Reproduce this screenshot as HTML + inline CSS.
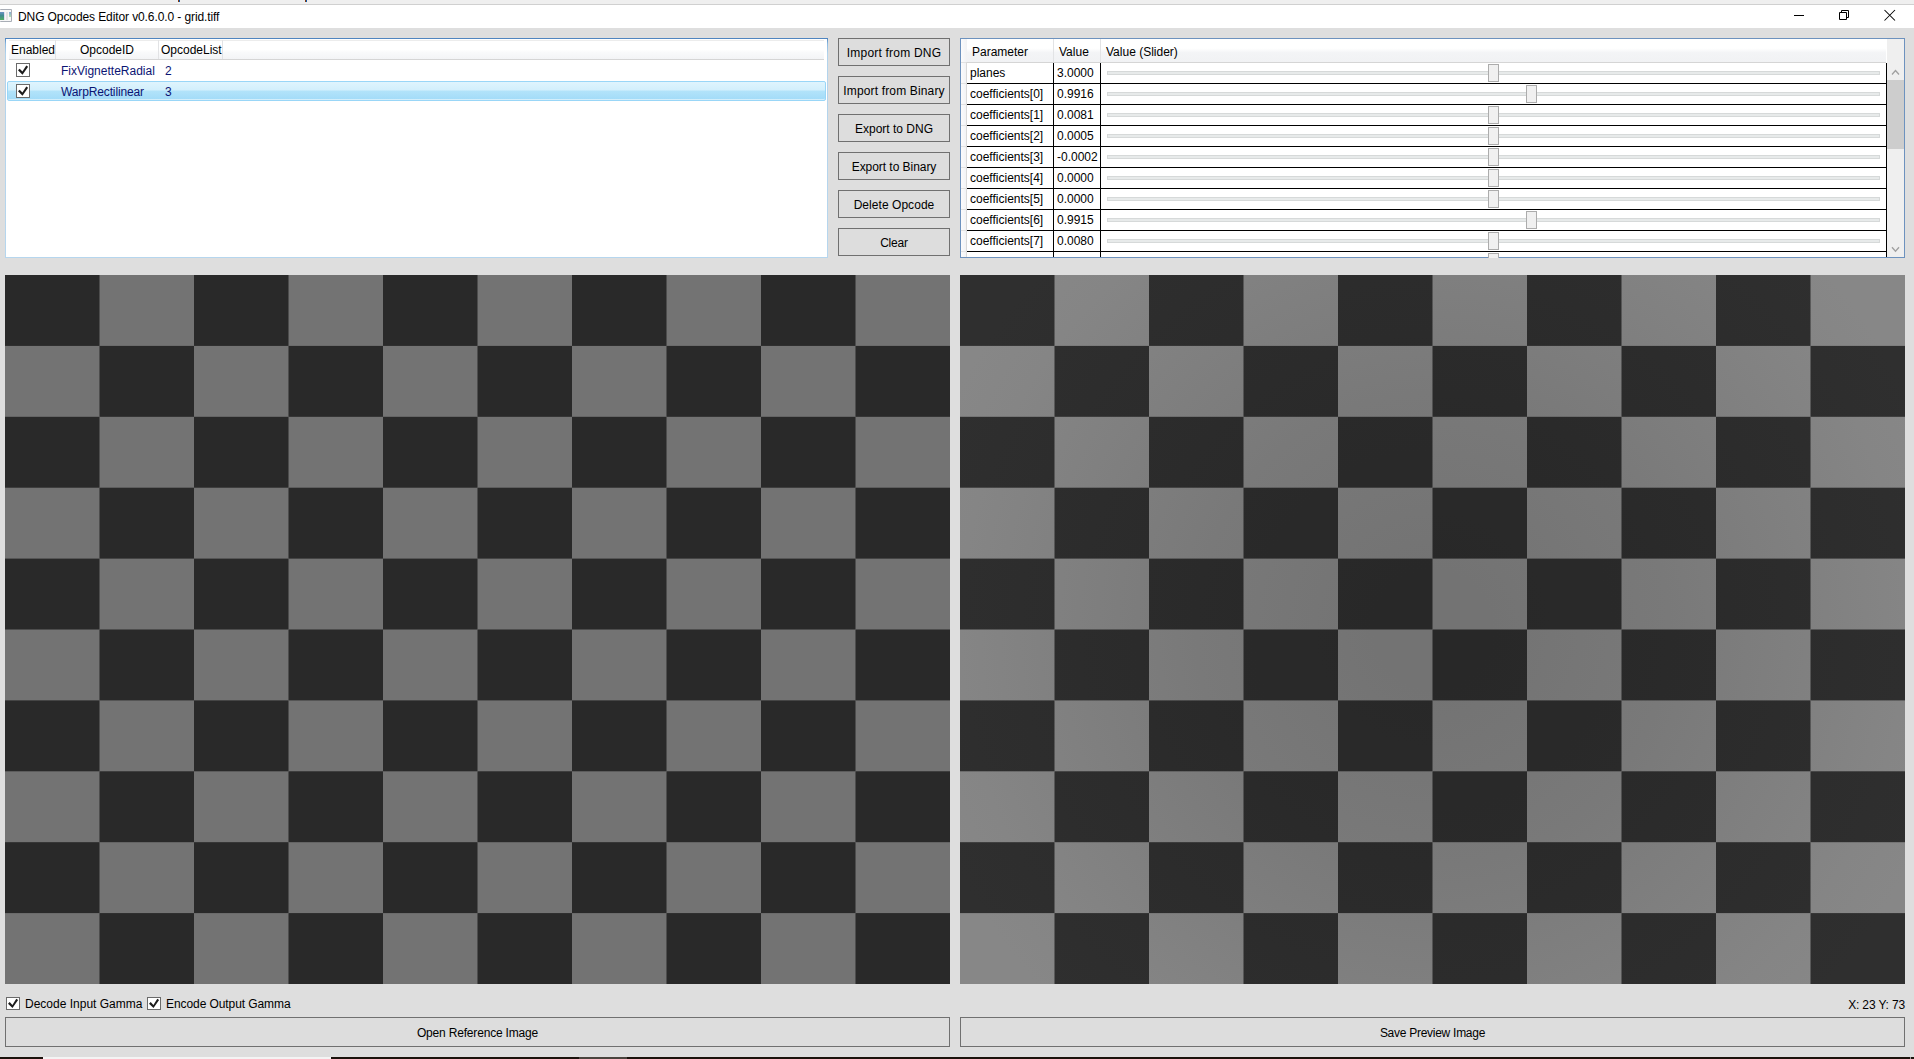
<!DOCTYPE html>
<html><head><meta charset="utf-8">
<style>
*{box-sizing:border-box;margin:0;padding:0}
html,body{width:1914px;height:1059px;overflow:hidden}
body{position:relative;background:#dedede;font-family:"Liberation Sans",sans-serif;font-size:12px;color:#000}
.a{position:absolute}
.t{position:absolute;white-space:pre;line-height:14px;height:14px}
.btn{position:absolute;background:#dddddd;border:1px solid #707070}
.btn span{position:absolute;left:0;right:0;text-align:center;white-space:pre;line-height:14px}
.cb{position:absolute;width:14px;height:14px;border:1px solid #6a6a6a;background:#fff}
.cb svg{position:absolute;left:-1px;top:-1px}
.hl{position:absolute;height:1px;background:#000}
.vl{position:absolute;width:1px;background:#000}
.track{position:absolute;left:1107px;width:773px;height:4px;background:#e7eaea;border:1px solid #d6d9d9}
.thumb{position:absolute;width:11px;height:18px;background:#f0f0f0;border:1px solid #acacac}
.navy{color:#0b1473}
.hdr{position:absolute;background:linear-gradient(#fff 0,#fff 40%,#f3f4f6 60%,#f1f2f4 100%)}
</style></head><body>
<!-- top strip -->
<div class="a" style="left:0;top:0;width:1914px;height:4px;background:#efefef"></div>
<div class="a" style="left:0;top:4px;width:1914px;height:1px;background:#d0d0d0"></div>
<div class="a" style="left:178px;top:0;width:1px;height:2px;background:#8a3c08"></div><div class="a" style="left:179px;top:0;width:1px;height:2px;background:#0a55b0"></div>
<div class="a" style="left:305px;top:0;width:1px;height:2px;background:#8a3c08"></div><div class="a" style="left:306px;top:0;width:1px;height:2px;background:#0a55b0"></div>
<!-- title bar -->
<div class="a" style="left:0;top:5px;width:1914px;height:23px;background:#fff"></div>
<svg class="a" style="left:0;top:9px" width="13" height="13" viewBox="0 0 13 13"><defs><linearGradient id="ig1" x1="0" y1="0" x2="0" y2="1"><stop offset="0" stop-color="#6c92c4"/><stop offset="0.45" stop-color="#3f8a8e"/><stop offset="1" stop-color="#52ad62"/></linearGradient><linearGradient id="ig2" x1="0" y1="0" x2="0" y2="1"><stop offset="0" stop-color="#84a6d6"/><stop offset="1" stop-color="#b2e0b0"/></linearGradient></defs><rect x="0" y="0" width="12" height="13" rx="1" fill="#a9aeb6"/><rect x="0" y="1" width="11" height="11" fill="#f7f7f7"/><rect x="0" y="3" width="4" height="8" fill="url(#ig1)"/><rect x="4" y="3" width="1" height="8" fill="#e2dcee"/><rect x="6" y="3" width="2" height="8" fill="#e3e3e3"/><rect x="9" y="3" width="2" height="5" fill="url(#ig2)"/></svg>
<div class="t" style="left:18px;top:10px;letter-spacing:-0.1px">DNG Opcodes Editor v0.6.0.0 - grid.tiff</div>
<div class="a" style="left:1794px;top:15px;width:10px;height:1px;background:#000"></div>
<svg class="a" style="left:1837px;top:8px" width="14" height="14" viewBox="0 0 14 14"><path d="M2.5 4.5h7v7h-7z M4.5 4.5v-2h7v7h-2" fill="none" stroke="#000" stroke-width="1"/></svg>
<svg class="a" style="left:1883px;top:9px" width="14" height="13" viewBox="0 0 14 13"><path d="M1.5 1L12 11.5M12 1L1.5 11.5" fill="none" stroke="#000" stroke-width="1.05"/></svg>

<!-- opcode list -->
<div class="a" style="left:5px;top:38px;width:823px;height:220px;background:linear-gradient(#4a80bc 0,#8dbbe2 6px,#b2d3ec 16px,#b6d6ee 100%)"></div><div class="a" style="left:6px;top:39px;width:821px;height:218px;background:#fff"></div>
<div class="a" style="left:9px;top:40px;width:815px;height:19px;background:linear-gradient(#fff 0,#fff 50%,#f9fafb 65%,#f3f4f6 100%)"></div><div class="a" style="left:9px;top:40px;width:815px;height:1px;background:#ececec"></div>
<div class="a" style="left:9px;top:59px;width:815px;height:1px;background:#d5d5d5"></div>
<div class="a" style="left:55px;top:40px;width:1px;height:19px;background:#e2e3e5"></div>
<div class="a" style="left:158px;top:40px;width:1px;height:19px;background:#e2e3e5"></div>
<div class="a" style="left:222px;top:40px;width:1px;height:19px;background:#e2e3e5"></div>
<div class="t" style="left:11px;top:43px">Enabled</div>
<div class="t" style="left:80px;top:43px">OpcodeID</div>
<div class="t" style="left:161px;top:43px">OpcodeList</div>
<div class="a" style="left:7px;top:81px;width:819px;height:20px;border:1px solid #99d6f7;border-radius:2px;box-shadow:inset 0 -1px #d3eefb;background:linear-gradient(#dff4fd 0,#d2effc 45%,#b2e3fa 50%,#a2dbf8 100%)"></div>
<div class="cb" style="left:16px;top:63px"><svg width="14" height="14" viewBox="0 0 14 14"><path d="M2.0 7.3L6.5 11.7L12.1 3.7L10.3 2.4L6.4 8.6L3.7 5.7Z" fill="#1c1c1c"/></svg></div>
<div class="cb" style="left:16px;top:84px"><svg width="14" height="14" viewBox="0 0 14 14"><path d="M2.0 7.3L6.5 11.7L12.1 3.7L10.3 2.4L6.4 8.6L3.7 5.7Z" fill="#1c1c1c"/></svg></div>
<div class="t navy" style="left:61px;top:64px">FixVignetteRadial</div>
<div class="t navy" style="left:165px;top:64px">2</div>
<div class="t navy" style="left:61px;top:85px;letter-spacing:-0.13px">WarpRectilinear</div>
<div class="t navy" style="left:165px;top:85px">3</div>

<!-- buttons -->
<div class="btn" style="left:838px;top:38px;width:112px;height:28px"><span style="top:7px;letter-spacing:0.2px">Import from DNG</span></div>
<div class="btn" style="left:838px;top:76px;width:112px;height:28px"><span style="top:7px;letter-spacing:0.15px">Import from Binary</span></div>
<div class="btn" style="left:838px;top:114px;width:112px;height:28px"><span style="top:7px;letter-spacing:0">Export to DNG</span></div>
<div class="btn" style="left:838px;top:152px;width:112px;height:28px"><span style="top:7px;letter-spacing:-0.05px">Export to Binary</span></div>
<div class="btn" style="left:838px;top:190px;width:112px;height:28px"><span style="top:7px;letter-spacing:0.05px">Delete Opcode</span></div>
<div class="btn" style="left:838px;top:228px;width:112px;height:28px"><span style="top:7px;letter-spacing:-0.2px">Clear</span></div>

<!-- params grid -->
<div class="a" style="left:960px;top:38px;width:945px;height:220px;background:#fff;border:1px solid #6d92be"></div>
<div class="hdr" style="left:967px;top:39px;width:919px;height:23px"></div>
<div class="a" style="left:961px;top:39px;width:6px;height:218px;background:linear-gradient(90deg,#fbfbfc,#f1f2f4)"></div><div class="a" style="left:966px;top:62px;width:1px;height:195px;background:#d9d9d9"></div><div class="a" style="left:961px;top:62px;width:5px;height:1px;background:#e2e2e2"></div><div class="a" style="left:961px;top:83px;width:5px;height:1px;background:#e2e2e2"></div><div class="a" style="left:961px;top:104px;width:5px;height:1px;background:#e2e2e2"></div><div class="a" style="left:961px;top:125px;width:5px;height:1px;background:#e2e2e2"></div><div class="a" style="left:961px;top:146px;width:5px;height:1px;background:#e2e2e2"></div><div class="a" style="left:961px;top:167px;width:5px;height:1px;background:#e2e2e2"></div><div class="a" style="left:961px;top:188px;width:5px;height:1px;background:#e2e2e2"></div><div class="a" style="left:961px;top:209px;width:5px;height:1px;background:#e2e2e2"></div><div class="a" style="left:961px;top:230px;width:5px;height:1px;background:#e2e2e2"></div><div class="a" style="left:961px;top:251px;width:5px;height:1px;background:#e2e2e2"></div>
<div class="a" style="left:967px;top:62px;width:919px;height:1px;background:#d5d5d5"></div>
<div class="a" style="left:1053px;top:39px;width:1px;height:23px;background:#e2e3e5"></div>
<div class="a" style="left:1100px;top:39px;width:1px;height:23px;background:#e2e3e5"></div>
<div class="t" style="left:972px;top:45px">Parameter</div>
<div class="t" style="left:1059px;top:45px">Value</div>
<div class="t" style="left:1106px;top:45px">Value (Slider)</div>
<div class="vl" style="left:1053px;top:63px;height:194px"></div>
<div class="vl" style="left:1100px;top:63px;height:194px"></div>
<div class="vl" style="left:1886px;top:63px;height:194px"></div>
<div class="t" style="left:970px;top:66px">planes</div>
<div class="t" style="left:1057px;top:66px">3.0000</div>
<div class="track" style="top:71px"></div>
<div class="thumb" style="left:1488px;top:64px"></div>
<div class="hl" style="left:967px;top:83px;width:920px"></div>
<div class="t" style="left:970px;top:87px">coefficients[0]</div>
<div class="t" style="left:1057px;top:87px">0.9916</div>
<div class="track" style="top:92px"></div>
<div class="thumb" style="left:1526px;top:85px"></div>
<div class="hl" style="left:967px;top:104px;width:920px"></div>
<div class="t" style="left:970px;top:108px">coefficients[1]</div>
<div class="t" style="left:1057px;top:108px">0.0081</div>
<div class="track" style="top:113px"></div>
<div class="thumb" style="left:1488px;top:106px"></div>
<div class="hl" style="left:967px;top:125px;width:920px"></div>
<div class="t" style="left:970px;top:129px">coefficients[2]</div>
<div class="t" style="left:1057px;top:129px">0.0005</div>
<div class="track" style="top:134px"></div>
<div class="thumb" style="left:1488px;top:127px"></div>
<div class="hl" style="left:967px;top:146px;width:920px"></div>
<div class="t" style="left:970px;top:150px">coefficients[3]</div>
<div class="t" style="left:1057px;top:150px">-0.0002</div>
<div class="track" style="top:155px"></div>
<div class="thumb" style="left:1488px;top:148px"></div>
<div class="hl" style="left:967px;top:167px;width:920px"></div>
<div class="t" style="left:970px;top:171px">coefficients[4]</div>
<div class="t" style="left:1057px;top:171px">0.0000</div>
<div class="track" style="top:176px"></div>
<div class="thumb" style="left:1488px;top:169px"></div>
<div class="hl" style="left:967px;top:188px;width:920px"></div>
<div class="t" style="left:970px;top:192px">coefficients[5]</div>
<div class="t" style="left:1057px;top:192px">0.0000</div>
<div class="track" style="top:197px"></div>
<div class="thumb" style="left:1488px;top:190px"></div>
<div class="hl" style="left:967px;top:209px;width:920px"></div>
<div class="t" style="left:970px;top:213px">coefficients[6]</div>
<div class="t" style="left:1057px;top:213px">0.9915</div>
<div class="track" style="top:218px"></div>
<div class="thumb" style="left:1526px;top:211px"></div>
<div class="hl" style="left:967px;top:230px;width:920px"></div>
<div class="t" style="left:970px;top:234px">coefficients[7]</div>
<div class="t" style="left:1057px;top:234px">0.0080</div>
<div class="track" style="top:239px"></div>
<div class="thumb" style="left:1488px;top:232px"></div>
<div class="hl" style="left:967px;top:251px;width:920px"></div>
<div class="thumb" style="left:1488px;top:253px;height:5px;border-bottom:none"></div>
<!-- scrollbar -->
<div class="a" style="left:1887px;top:39px;width:17px;height:218px;background:#efefef"></div>
<div class="a" style="left:1887px;top:80px;width:17px;height:69px;background:#cdcdcd"></div>
<svg class="a" style="left:1890px;top:66px" width="11" height="10" viewBox="0 0 11 10"><path d="M2 8.5L5.5 4.5L9 8.5" fill="none" stroke="#a0a0a0" stroke-width="1.3"/></svg>
<svg class="a" style="left:1890px;top:244px" width="11" height="10" viewBox="0 0 11 10"><path d="M2 3.2L5.5 7.2L9 3.2" fill="none" stroke="#a0a0a0" stroke-width="1.3"/></svg>

<!-- images -->
<div class="a" style="left:5px;top:275px;width:945px;height:709px"><svg width="945" height="709" viewBox="0 0 945 709" ><rect width="945" height="709" fill="#737373"/><g fill="#292929"><rect x="0.0" y="0.0" width="94.5" height="70.9"/><rect x="189.0" y="0.0" width="94.5" height="70.9"/><rect x="378.0" y="0.0" width="94.5" height="70.9"/><rect x="567.0" y="0.0" width="94.5" height="70.9"/><rect x="756.0" y="0.0" width="94.5" height="70.9"/><rect x="94.5" y="70.9" width="94.5" height="70.9"/><rect x="283.5" y="70.9" width="94.5" height="70.9"/><rect x="472.5" y="70.9" width="94.5" height="70.9"/><rect x="661.5" y="70.9" width="94.5" height="70.9"/><rect x="850.5" y="70.9" width="94.5" height="70.9"/><rect x="0.0" y="141.8" width="94.5" height="70.9"/><rect x="189.0" y="141.8" width="94.5" height="70.9"/><rect x="378.0" y="141.8" width="94.5" height="70.9"/><rect x="567.0" y="141.8" width="94.5" height="70.9"/><rect x="756.0" y="141.8" width="94.5" height="70.9"/><rect x="94.5" y="212.7" width="94.5" height="70.9"/><rect x="283.5" y="212.7" width="94.5" height="70.9"/><rect x="472.5" y="212.7" width="94.5" height="70.9"/><rect x="661.5" y="212.7" width="94.5" height="70.9"/><rect x="850.5" y="212.7" width="94.5" height="70.9"/><rect x="0.0" y="283.6" width="94.5" height="70.9"/><rect x="189.0" y="283.6" width="94.5" height="70.9"/><rect x="378.0" y="283.6" width="94.5" height="70.9"/><rect x="567.0" y="283.6" width="94.5" height="70.9"/><rect x="756.0" y="283.6" width="94.5" height="70.9"/><rect x="94.5" y="354.5" width="94.5" height="70.9"/><rect x="283.5" y="354.5" width="94.5" height="70.9"/><rect x="472.5" y="354.5" width="94.5" height="70.9"/><rect x="661.5" y="354.5" width="94.5" height="70.9"/><rect x="850.5" y="354.5" width="94.5" height="70.9"/><rect x="0.0" y="425.4" width="94.5" height="70.9"/><rect x="189.0" y="425.4" width="94.5" height="70.9"/><rect x="378.0" y="425.4" width="94.5" height="70.9"/><rect x="567.0" y="425.4" width="94.5" height="70.9"/><rect x="756.0" y="425.4" width="94.5" height="70.9"/><rect x="94.5" y="496.3" width="94.5" height="70.9"/><rect x="283.5" y="496.3" width="94.5" height="70.9"/><rect x="472.5" y="496.3" width="94.5" height="70.9"/><rect x="661.5" y="496.3" width="94.5" height="70.9"/><rect x="850.5" y="496.3" width="94.5" height="70.9"/><rect x="0.0" y="567.2" width="94.5" height="70.9"/><rect x="189.0" y="567.2" width="94.5" height="70.9"/><rect x="378.0" y="567.2" width="94.5" height="70.9"/><rect x="567.0" y="567.2" width="94.5" height="70.9"/><rect x="756.0" y="567.2" width="94.5" height="70.9"/><rect x="94.5" y="638.1" width="94.5" height="70.9"/><rect x="283.5" y="638.1" width="94.5" height="70.9"/><rect x="472.5" y="638.1" width="94.5" height="70.9"/><rect x="661.5" y="638.1" width="94.5" height="70.9"/><rect x="850.5" y="638.1" width="94.5" height="70.9"/></g></svg></div>
<div class="a" style="left:960px;top:275px;width:945px;height:709px"><svg width="945" height="709" viewBox="0 0 945 709" ><defs><radialGradient id="vl" gradientUnits="userSpaceOnUse" cx="472.5" cy="354.5" r="590.7"><stop offset="0" stop-color="#737373"/><stop offset="0.1" stop-color="#737373"/><stop offset="0.2" stop-color="#757575"/><stop offset="0.3" stop-color="#777777"/><stop offset="0.4" stop-color="#797979"/><stop offset="0.5" stop-color="#7c7c7c"/><stop offset="0.6" stop-color="#7f7f7f"/><stop offset="0.7" stop-color="#828282"/><stop offset="0.8" stop-color="#858585"/><stop offset="0.9" stop-color="#878787"/><stop offset="1.0" stop-color="#878787"/></radialGradient><radialGradient id="vd" gradientUnits="userSpaceOnUse" cx="472.5" cy="354.5" r="590.7"><stop offset="0" stop-color="#282828"/><stop offset="0.1" stop-color="#282828"/><stop offset="0.2" stop-color="#292929"/><stop offset="0.3" stop-color="#292929"/><stop offset="0.4" stop-color="#2a2a2a"/><stop offset="0.5" stop-color="#2b2b2b"/><stop offset="0.6" stop-color="#2c2c2c"/><stop offset="0.7" stop-color="#2d2d2d"/><stop offset="0.8" stop-color="#2e2e2e"/><stop offset="0.9" stop-color="#2f2f2f"/><stop offset="1.0" stop-color="#2f2f2f"/></radialGradient></defs><rect width="945" height="709" fill="url(#vl)"/><g fill="url(#vd)"><rect x="0.0" y="0.0" width="94.5" height="70.9"/><rect x="189.0" y="0.0" width="94.5" height="70.9"/><rect x="378.0" y="0.0" width="94.5" height="70.9"/><rect x="567.0" y="0.0" width="94.5" height="70.9"/><rect x="756.0" y="0.0" width="94.5" height="70.9"/><rect x="94.5" y="70.9" width="94.5" height="70.9"/><rect x="283.5" y="70.9" width="94.5" height="70.9"/><rect x="472.5" y="70.9" width="94.5" height="70.9"/><rect x="661.5" y="70.9" width="94.5" height="70.9"/><rect x="850.5" y="70.9" width="94.5" height="70.9"/><rect x="0.0" y="141.8" width="94.5" height="70.9"/><rect x="189.0" y="141.8" width="94.5" height="70.9"/><rect x="378.0" y="141.8" width="94.5" height="70.9"/><rect x="567.0" y="141.8" width="94.5" height="70.9"/><rect x="756.0" y="141.8" width="94.5" height="70.9"/><rect x="94.5" y="212.7" width="94.5" height="70.9"/><rect x="283.5" y="212.7" width="94.5" height="70.9"/><rect x="472.5" y="212.7" width="94.5" height="70.9"/><rect x="661.5" y="212.7" width="94.5" height="70.9"/><rect x="850.5" y="212.7" width="94.5" height="70.9"/><rect x="0.0" y="283.6" width="94.5" height="70.9"/><rect x="189.0" y="283.6" width="94.5" height="70.9"/><rect x="378.0" y="283.6" width="94.5" height="70.9"/><rect x="567.0" y="283.6" width="94.5" height="70.9"/><rect x="756.0" y="283.6" width="94.5" height="70.9"/><rect x="94.5" y="354.5" width="94.5" height="70.9"/><rect x="283.5" y="354.5" width="94.5" height="70.9"/><rect x="472.5" y="354.5" width="94.5" height="70.9"/><rect x="661.5" y="354.5" width="94.5" height="70.9"/><rect x="850.5" y="354.5" width="94.5" height="70.9"/><rect x="0.0" y="425.4" width="94.5" height="70.9"/><rect x="189.0" y="425.4" width="94.5" height="70.9"/><rect x="378.0" y="425.4" width="94.5" height="70.9"/><rect x="567.0" y="425.4" width="94.5" height="70.9"/><rect x="756.0" y="425.4" width="94.5" height="70.9"/><rect x="94.5" y="496.3" width="94.5" height="70.9"/><rect x="283.5" y="496.3" width="94.5" height="70.9"/><rect x="472.5" y="496.3" width="94.5" height="70.9"/><rect x="661.5" y="496.3" width="94.5" height="70.9"/><rect x="850.5" y="496.3" width="94.5" height="70.9"/><rect x="0.0" y="567.2" width="94.5" height="70.9"/><rect x="189.0" y="567.2" width="94.5" height="70.9"/><rect x="378.0" y="567.2" width="94.5" height="70.9"/><rect x="567.0" y="567.2" width="94.5" height="70.9"/><rect x="756.0" y="567.2" width="94.5" height="70.9"/><rect x="94.5" y="638.1" width="94.5" height="70.9"/><rect x="283.5" y="638.1" width="94.5" height="70.9"/><rect x="472.5" y="638.1" width="94.5" height="70.9"/><rect x="661.5" y="638.1" width="94.5" height="70.9"/><rect x="850.5" y="638.1" width="94.5" height="70.9"/></g></svg></div>

<!-- bottom -->
<div class="cb" style="left:6px;top:997px;height:13px"><svg width="14" height="13" viewBox="0 0.6 14 13" style="position:absolute;left:-1px;top:-1px"><path d="M2.0 7.3L6.5 11.7L12.1 3.7L10.3 2.4L6.4 8.6L3.7 5.7Z" fill="#1c1c1c"/></svg></div>
<div class="cb" style="left:147px;top:997px;height:13px"><svg width="14" height="13" viewBox="0 0.6 14 13" style="position:absolute;left:-1px;top:-1px"><path d="M2.0 7.3L6.5 11.7L12.1 3.7L10.3 2.4L6.4 8.6L3.7 5.7Z" fill="#1c1c1c"/></svg></div>
<div class="t" style="left:25px;top:997px">Decode Input Gamma</div>
<div class="t" style="left:166px;top:997px;letter-spacing:-0.08px">Encode Output Gamma</div>
<div class="t" style="right:9px;top:998px;letter-spacing:-0.15px">X: 23 Y: 73</div>
<div class="btn" style="left:5px;top:1017px;width:945px;height:30px"><span style="top:8px;letter-spacing:-0.18px">Open Reference Image</span></div>
<div class="btn" style="left:960px;top:1017px;width:945px;height:30px"><span style="top:8px;letter-spacing:-0.27px">Save Preview Image</span></div>
<!-- taskbar strip -->
<div class="a" style="left:0;top:1057px;width:1914px;height:2px;background:#1b120c"></div>
<div class="a" style="left:43px;top:1057px;width:288px;height:2px;background:#f4f4f4"></div>
<div class="a" style="left:579px;top:1057px;width:48px;height:2px;background:#4a443e"></div><div class="a" style="left:1910px;top:1057px;width:1px;height:2px;background:#9a9a9a"></div>
</body></html>
